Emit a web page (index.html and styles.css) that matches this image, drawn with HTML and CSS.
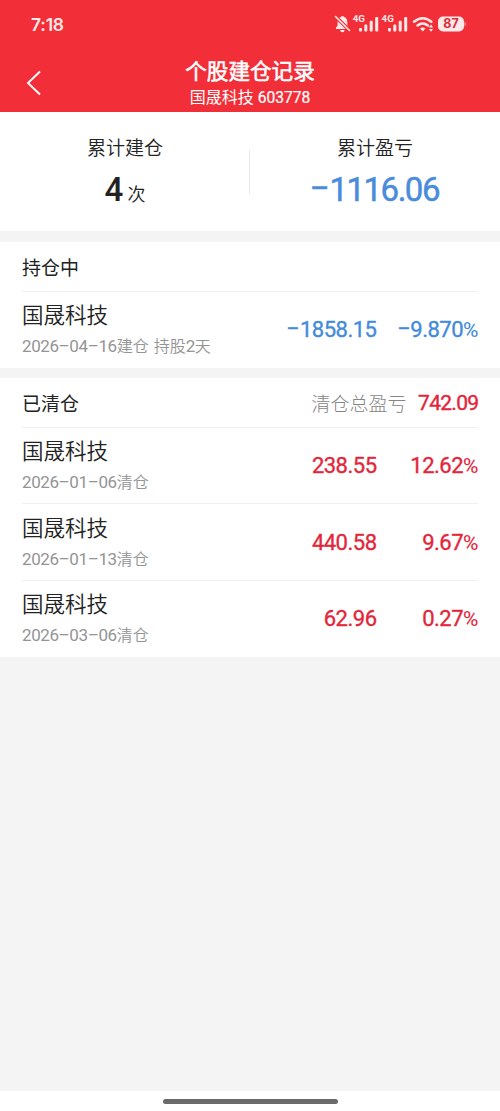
FILE: index.html
```html
<!DOCTYPE html>
<html lang="zh-CN">
<head>
<meta charset="utf-8">
<title>个股建仓记录</title>
<link rel="stylesheet" href="styles.css">
</head>
<body>
<header class="header">
  <div class="status">
    <span class="time">7:18</span>
    <svg class="status-icons" width="136" height="24" viewBox="0 0 136 24">
      <g fill="#ffe9e9">
        <path d="M6 17v-1.500l1.600-1.800V10C7.600 7.400 9 5.600 11 5.100a1.600 1.600 0 0 1 3 0c2 .5 3.300 2.300 3.300 4.900v3.700l1.600 1.800V17zM10.200 18h4.400a2.200 2.200 0 0 1-4.400 0z"/>
        <path d="M4.600 3.600 20 18.800" stroke="#f22f38" stroke-width="3.600"/>
        <path d="M5.500 4.500 19.500 18.500" stroke="#ffe9e9" stroke-width="1.600" stroke-linecap="round"/>
        <text class="net" x="22.800" y="9.600">4G</text>
        <rect x="29" y="16" width="3" height="3.500" rx="1"/><rect x="34.300" y="12.500" width="3" height="7" rx="1"/><rect x="39.700" y="8.800" width="3" height="10.700" rx="1"/><rect x="45.200" y="5" width="3" height="14.500" rx="1"/>
        <text class="net" x="51.600" y="9.600">4G</text>
        <rect x="58" y="16" width="3" height="3.500" rx="1"/><rect x="63.300" y="12.500" width="3" height="7" rx="1"/><rect x="68.700" y="8.800" width="3" height="10.700" rx="1"/><rect x="74.200" y="5" width="3" height="14.500" rx="1"/>
        <path d="M84 9.700q8.700-7 17.400 0" fill="none" stroke="#ffe9e9" stroke-width="2.500" stroke-linecap="round"/>
        <path d="M87.500 13.500q5.200-4 10.400 0" fill="none" stroke="#ffe9e9" stroke-width="2.500" stroke-linecap="round"/>
        <path d="M90 16.500q2.700-1.800 5.400 0l-2.700 3z"/>
        <path d="M101 12.500l2.200 2.900h-4.400zM101 19.700l2.200-2.800h-4.400z"/>
        <rect x="108" y="4.500" width="26" height="15" rx="5"/>
        <path d="M134.600 9.500q1.400.7 1.400 2.500t-1.400 2.500z" opacity=".65"/>
      </g>
      <text class="battery" x="121" y="16.400">87</text>
    </svg>
  </div>
  <div class="navbar">
    <svg class="back" width="16" height="26" viewBox="0 0 16 26"><path d="M14 1.500 2 13l12 11.500" fill="none" stroke="#fff" stroke-width="1.900"/></svg>
    <div class="titles">
      <h1 class="title">个股建仓记录</h1>
      <div class="subtitle">国晟科技 <span class="code">603778</span></div>
    </div>
  </div>
</header>
<section class="summary">
  <div class="stat">
    <div class="stat-label">累计建仓</div>
    <div class="stat-value"><span class="count">4</span><span class="unit">次</span></div>
  </div>
  <div class="stat">
    <div class="stat-label">累计盈亏</div>
    <div class="stat-value total"><span class="minus">–</span>1116.06</div>
  </div>
</section>
<section class="group">
  <div class="group-head"><h2 class="group-title">持仓中</h2></div>
  <div class="row">
    <div class="stock"><div class="name">国晟科技</div><div class="date"><span class="day">2026–04–16</span>建仓 持股<span class="day">2</span>天</div></div>
    <div class="amount down"><span class="minus">–</span>1858.15</div><div class="rate down"><span class="minus">–</span>9.870<span class="pct">%</span></div>
  </div>
</section>
<section class="group">
  <div class="group-head"><h2 class="group-title">已清仓</h2><span class="sum-label">清仓总盈亏</span><span class="sum up">742.09</span></div>
  <div class="row">
    <div class="stock"><div class="name">国晟科技</div><div class="date"><span class="day">2026–01–06</span>清仓</div></div>
    <div class="amount up">238.55</div><div class="rate up">12.62<span class="pct">%</span></div>
  </div>
  <div class="row">
    <div class="stock"><div class="name">国晟科技</div><div class="date"><span class="day">2026–01–13</span>清仓</div></div>
    <div class="amount up">440.58</div><div class="rate up">9.67<span class="pct">%</span></div>
  </div>
  <div class="row">
    <div class="stock"><div class="name">国晟科技</div><div class="date"><span class="day">2026–03–06</span>清仓</div></div>
    <div class="amount up">62.96</div><div class="rate up">0.27<span class="pct">%</span></div>
  </div>
</section>
<footer class="home"><div class="home-bar"></div></footer>
</body>
</html>
```
FILE: styles.css
```css
* { box-sizing: border-box; }
body {
  margin: 0;
  min-height: 1111px;
  display: flex;
  flex-direction: column;
  background: #f4f4f4;
  color: #222;
  font-family: Roboto, "Noto Sans CJK SC", sans-serif;
}
h1, h2 { margin: 0; font-weight: 400; }
.header { height: 112px; background: #f22f38; color: #fff; }
.status { height: 48px; padding: 0 34px 0 31px; display: flex; align-items: center; justify-content: space-between; }
.time { font: 600 17.5px/24px Inter, sans-serif; letter-spacing: -.2px; color: #ffe9e9; padding-top: 1px; }
.net { font: 700 9.7px Roboto, sans-serif; }
.battery { font: 700 12.5px Inter, sans-serif; text-anchor: middle; fill: #d92f3b; }
.navbar { height: 64px; display: grid; grid-template-columns: 60px 1fr 60px; }
.back { margin: 22px 0 0 26px; }
.titles { padding-top: 10px; text-align: center; }
.title { font-size: 21.6px; line-height: 28px; font-weight: 400; -webkit-text-stroke: .55px #fff; }
.subtitle { font-size: 16px; line-height: 23px; }
.code { font-size: 15.6px; -webkit-text-stroke: .2px #fff; }
.summary { height: 119px; margin-bottom: 11px; display: grid; grid-template-columns: 1fr 1fr; background: #fff; text-align: center; }
.stat { padding-top: 22px; }
.stat:first-child { background: linear-gradient(#e8e8e8, #e8e8e8) 100% 38px / 1px 44px no-repeat; }
.stat-label { font-size: 19px; line-height: 30px; font-weight: 350; }
.stat-value { height: 54px; line-height: 52px; }
.count { font-size: 33px; font-weight: 500; margin-right: 4px; }
.unit { font-size: 18px; font-weight: 350; }
.total { font-size: 33px; color: #4a8cdb; letter-spacing: -1.5px; padding-right: 3px; -webkit-text-stroke: .5px #4a8cdb; }
.minus { display: inline-block; transform: translateY(-.04em) scaleX(.9); transform-origin: right; margin-right: .04em; margin-left: -.12em; }
.total .minus { margin-left: 0; }
.group { padding: 0 22px; margin-bottom: 10px; background: #fff; }
.group-head { height: 49px; display: flex; align-items: center; }
.group-title { flex: 1; font-size: 19px; }
.sum-label { font-size: 19px; color: #858585; margin-right: 11.5px; font-weight: 300; }
.sum { font-size: 21px; padding-top: 1px; letter-spacing: -.7px; -webkit-text-stroke: .4px; margin-right: -.4px; }
.row { height: 76.7px; border-top: 1px solid #f0f0f0; display: flex; align-items: center; }
.stock { flex: 1; padding-top: 1px; }
.name { font-size: 21.5px; line-height: 33px; font-weight: 350; }
.date { font-size: 16px; line-height: 28px; color: #949494; font-weight: 350; word-spacing: 1px; }
.day { font-size: 17px; font-weight: 400; letter-spacing: -.4px; }
.amount, .rate { font-size: 22px; letter-spacing: -.5px; -webkit-text-stroke: .35px; text-align: right; }
.amount { margin-right: -.5px; }
.rate { width: 102px; }
.pct { font-size: 21px; -webkit-text-stroke: .1px; }
.up { color: #e3263b; }
.down { color: #438bdb; }
.home { height: 20px; margin-top: auto; display: flex; justify-content: center; padding-top: 8px; background: #fff; }
.home-bar { width: 175px; height: 5px; border-radius: 3px; background: #6a6a6a; }
```
